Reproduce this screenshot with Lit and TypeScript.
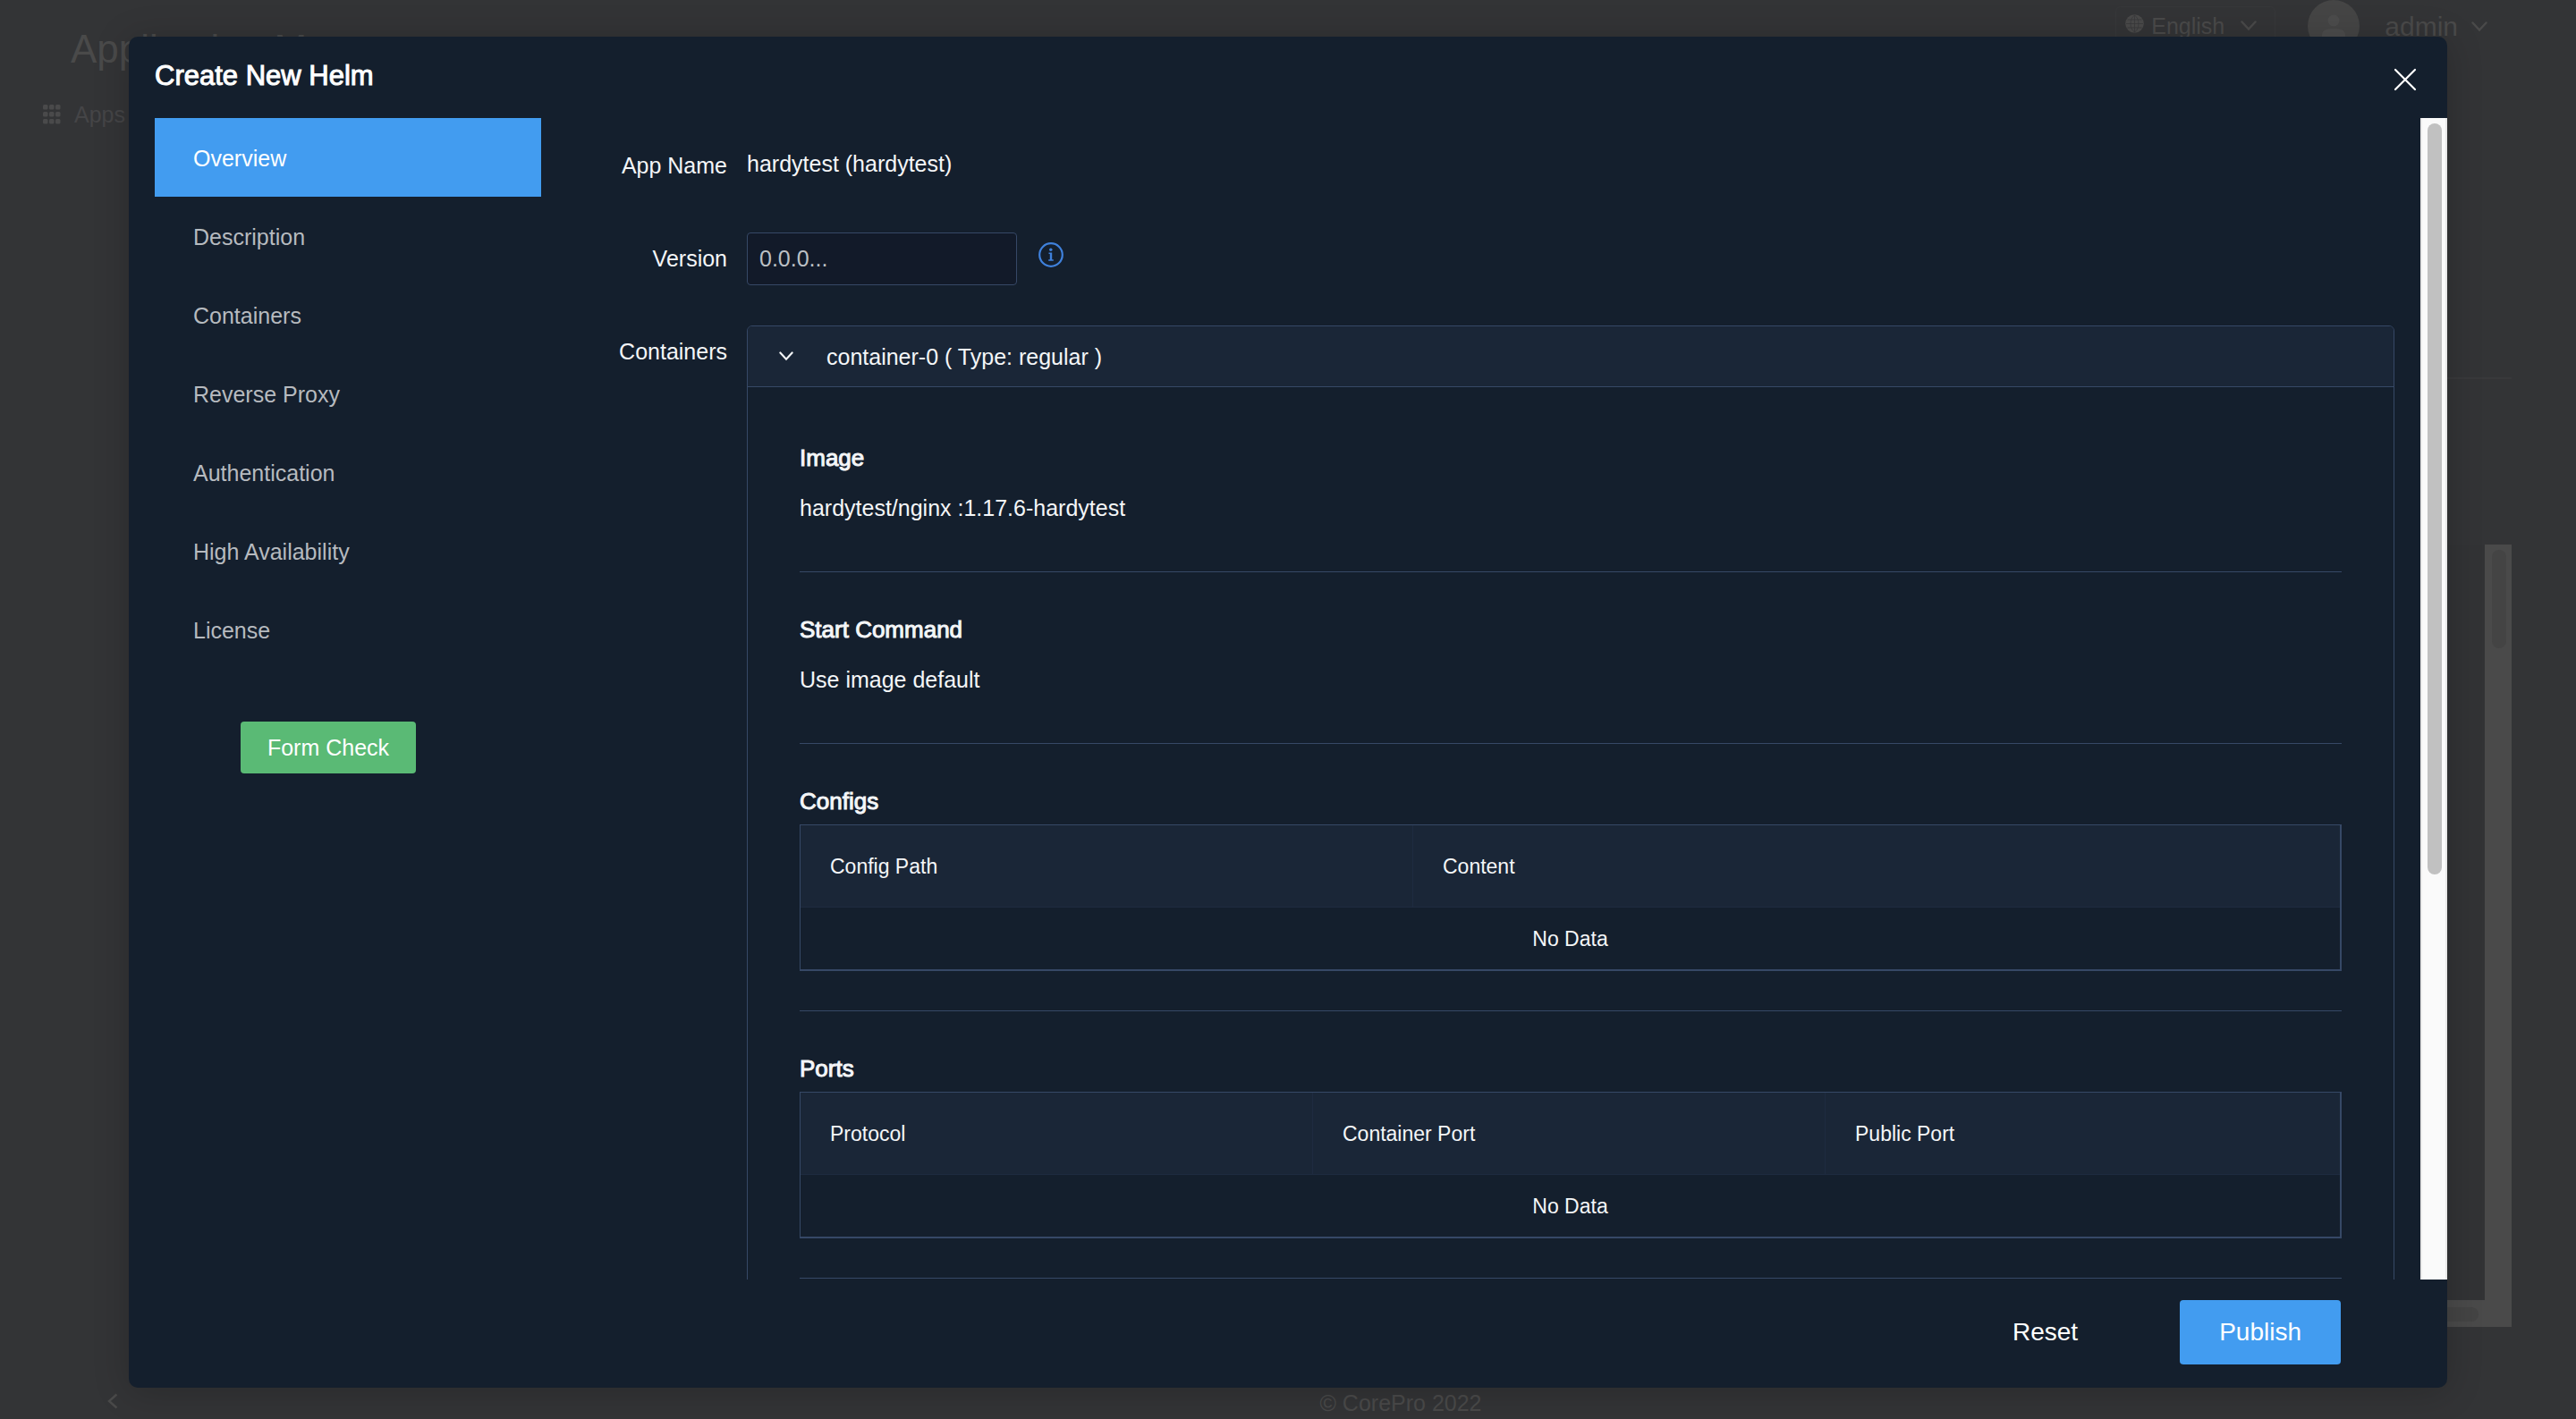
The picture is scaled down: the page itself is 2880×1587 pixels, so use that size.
import { LitElement, html, svg, css } from "lit";
import { customElement, property, state } from "lit/decorators.js";
import { classMap } from "lit/directives/class-map.js";

const chevronDown = (cls: string) => html`
  <svg class=${cls} viewBox="0 0 18 12" aria-hidden="true">
    <path d="M1.5 1.5 L9 9.5 L16.5 1.5" fill="none" stroke="currentColor" stroke-width="2.4" stroke-linecap="round" />
  </svg>
`;

/** Table with a header row and an empty-state row. */
@customElement("empty-table")
export class EmptyTable extends LitElement {
  @property({ attribute: false }) columns: { label: string; width?: number }[] = [];
  @property() caption = "";

  static styles = css`
    :host {
      display: block;
    }
    .table {
      width: 100%;
      table-layout: fixed;
      border-collapse: separate;
      border-spacing: 0;
      border: 1px solid #364866;
      border-right-width: 2px;
      border-bottom-width: 2px;
      font-size: 23px;
      line-height: 36px;
      color: #f4f6f8;
    }
    .head {
      box-sizing: border-box;
      height: 92px;
      padding: 0 33px;
      background: #1a2637;
      border-bottom: 1px solid #1e2b40;
      border-right: 1px solid #1e2b40;
      text-align: left;
      font-weight: 400;
    }
    .head:last-child {
      border-right: none;
    }
    .empty {
      height: 69px;
      padding: 0;
      text-align: center;
    }
  `;

  render() {
    return html`
      <table class="table" aria-label=${this.caption}>
        <colgroup>
          ${this.columns.map((c) => html`<col width=${c.width ?? "auto"} />`)}
        </colgroup>
        <thead>
          <tr>
            ${this.columns.map((c) => html`<th class="head" scope="col">${c.label}</th>`)}
          </tr>
        </thead>
        <tbody>
          <tr>
            <td class="empty" colspan=${this.columns.length}>No Data</td>
          </tr>
        </tbody>
      </table>
    `;
  }
}

/** Dimmed application page that lies behind the dialog. */
@customElement("backdrop-page")
export class BackdropPage extends LitElement {
  static styles = css`
    :host {
      display: grid;
      grid-template-columns: 252px 1fr;
      grid-template-rows: 92px 1fr 38px;
      height: 100%;
      overflow: hidden;
      background: #333436;
      color: #4a4a4a;
      font-size: 25px;
      line-height: 36px;
    }
    .topbar {
      grid-column: 1 / -1;
      display: flex;
      align-items: flex-start;
      padding: 0 99px 0 79px;
    }
    .title {
      flex: 1;
      margin: 0;
      padding-top: 30px;
      font-size: 44px;
      line-height: 50px;
      font-weight: 400;
      color: #4a4a4a;
    }
    .lang {
      display: flex;
      align-items: center;
      gap: 8px;
      box-sizing: border-box;
      width: 179px;
      height: 44px;
      margin-top: 7px;
      padding: 0 20px 0 10px;
      border: 1px solid #37383a;
      border-radius: 6px;
    }
    .globe {
      width: 21px;
      height: 21px;
      flex: none;
      margin-bottom: 6px;
    }
    .select {
      flex: 1;
      min-width: 0;
      appearance: none;
      border: 0;
      padding: 0;
      background: none;
      color: inherit;
      font: inherit;
      height: 36px;
    }
    .chev {
      width: 18px;
      height: 12px;
      flex: none;
    }
    .avatar {
      width: 58px;
      height: 58px;
      margin: 0 28px 0 36px;
    }
    .user {
      display: flex;
      align-items: center;
      gap: 15px;
      border: 0;
      padding: 12px 0 0;
      background: none;
      color: inherit;
      font: inherit;
      font-size: 30px;
    }
    .side {
      padding: 18px 0 0 48px;
    }
    .link {
      display: flex;
      align-items: center;
      gap: 14px;
      color: #454547;
      text-decoration: none;
    }
    .dots {
      width: 21px;
      height: 22px;
    }
    .content {
      display: flex;
      flex-direction: column;
      padding: 330px 72px 65px 0;
    }
    .rule {
      border-top: 2px solid #39393b;
    }
    .pane {
      flex: 1;
      display: grid;
      grid-template-columns: 1fr 30px;
      grid-template-rows: 1fr 30px;
      margin-top: 185px;
      background: #323335;
    }
    .vbar {
      grid-row: 1 / 3;
      grid-column: 2;
      padding: 6px 6px 0 8px;
      background: #4a4a4a;
    }
    .vthumb {
      height: 110px;
      border-radius: 8px;
      background: #444;
    }
    .hbar {
      display: flex;
      justify-content: flex-end;
      align-items: center;
      padding: 2px 7px 0 0;
      background: #4a4a4a;
    }
    .hthumb {
      width: 50%;
      height: 16px;
      border-radius: 8px;
      background: #444;
    }
    .fold {
      border: 0;
      padding: 0;
      background: none;
      color: #4a4a4a;
    }
    .fold-icon {
      width: 12px;
      height: 18px;
    }
    .foot {
      text-align: center;
      line-height: 40px;
    }
  `;

  render() {
    return html`
      <header class="topbar">
        <h1 class="title">Application Management</h1>
        <label class="lang">
          <svg class="globe" viewBox="0 0 21 21" aria-hidden="true">
            <circle cx="10.5" cy="10.5" r="10.3" fill="currentColor" />
            <path
              d="M1 10.500H20M10.500 1V20M2.500 6H18.500M2.500 15H18.500M10.500 1C4.500 5 4.500 16 10.500 20M10.500 1C16.500 5 16.500 16 10.500 20"
              fill="none"
              stroke="#38393b"
              stroke-width="0.8"
            />
          </svg>
          <select class="select" aria-label="Language">
            <option>English</option>
          </select>
          ${chevronDown("chev")}
        </label>
        <svg class="avatar" viewBox="0 0 58 58" aria-hidden="true">
          <circle cx="29" cy="29" r="29" fill="#454545" />
          <circle cx="29" cy="23" r="6.500" fill="#4c4c4c" />
          <path d="M16 44v-5q0-7 13-7t13 7v5z" fill="#4c4c4c" />
        </svg>
        <button class="user">admin ${chevronDown("chev")}</button>
      </header>
      <nav class="side">
        <a class="link" href="#apps">
          <svg class="dots" viewBox="0 0 21 22" aria-hidden="true">
            ${[0, 8, 16].map((y) =>
              [0, 7, 14].map((x) => svg`<rect x=${x} y=${y} width="5.500" height="5.500" rx="1.500" fill="#4a4a4b" />`),
            )}
          </svg>
          Apps
        </a>
      </nav>
      <main class="content">
        <div class="rule"></div>
        <div class="pane">
          <div></div>
          <div class="vbar"><div class="vthumb"></div></div>
          <div class="hbar"><div class="hthumb"></div></div>
        </div>
      </main>
      <button class="fold" aria-label="Collapse menu">
        <svg class="fold-icon" viewBox="0 0 12 18">
          <path d="M10.500 1.500 L2 9 L10.500 16.500" fill="none" stroke="currentColor" stroke-width="2.4" />
        </svg>
      </button>
      <footer class="foot">© CorePro 2022</footer>
    `;
  }
}

@customElement("app-root")
export class AppRoot extends LitElement {
  @state() private active = "Overview";

  private readonly steps = [
    "Overview",
    "Description",
    "Containers",
    "Reverse Proxy",
    "Authentication",
    "High Availability",
    "License",
  ];

  static styles = css`
    :host {
      display: block;
      position: relative;
      height: 100vh;
      font-family: "Liberation Sans", Arial, sans-serif;
      font-size: 25px;
      line-height: 36px;
      color: #f4f6f8;
    }
    .overlay {
      position: absolute;
      inset: 0;
      display: flex;
      padding: 41px 5% 35px;
    }
    .dialog {
      flex: 1;
      min-width: 0;
      display: grid;
      grid-template-rows: 91px minmax(0, 1fr) 121px;
      border-radius: 10px;
      background: #141f2d;
      box-shadow: 0 4px 40px rgba(0, 0, 0, 0.2);
    }
    .header {
      display: flex;
      align-items: flex-start;
      justify-content: space-between;
      padding: 26px 32px 0 29px;
    }
    .heading {
      margin: 0;
      font-size: 31px;
      line-height: 36px;
      font-weight: 400;
      color: #fff;
      -webkit-text-stroke: 1px #fff;
    }
    .close {
      display: flex;
      border: 0;
      padding: 7px 0 0;
      background: none;
      color: #fff;
    }
    .close-icon {
      width: 30px;
      height: 30px;
    }
    .body {
      display: grid;
      grid-template-columns: 461px minmax(0, 1fr) 30px;
      min-height: 0;
    }
    .nav {
      padding-left: 29px;
    }
    .steps {
      margin: 0;
      padding: 0;
      list-style: none;
    }
    .step {
      display: block;
      height: 88px;
      padding-left: 43px;
      line-height: 90px;
      color: #b6babf;
      text-decoration: none;
    }
    .step.active {
      background: #429cf0;
      color: #fff;
    }
    .check {
      height: 58px;
      width: 196px;
      margin: 59px 0 0 96px;
      border: 0;
      padding: 0;
      border-radius: 4px;
      background: #5aba75;
      color: #fff;
      font: inherit;
    }
    .form {
      overflow: hidden;
      padding: 24px 29px 0 0;
      display: grid;
      grid-template-columns: 208px minmax(0, 1fr);
      column-gap: 22px;
      row-gap: 46px;
      align-items: start;
      align-content: start;
    }
    .label {
      text-align: right;
      line-height: 58px;
    }
    .value {
      line-height: 54px;
    }
    .version {
      display: flex;
      gap: 24px;
    }
    .input {
      box-sizing: border-box;
      width: 302px;
      height: 59px;
      padding: 0 13px;
      border: 1px solid #364866;
      border-radius: 4px;
      background: #121a29;
      color: #f4f6f8;
      font: inherit;
      margin-bottom: -1px;
    }
    .input::placeholder {
      color: #bcc0c5;
      opacity: 1;
    }
    .info {
      width: 28px;
      height: 50px;
      color: #3f81dc;
    }
    .panel {
      border: 1px solid #364866;
      border-radius: 6px;
    }
    .panel-head {
      display: flex;
      align-items: center;
      gap: 37px;
      width: 100%;
      height: 68px;
      border: 0;
      border-bottom: 1px solid #364866;
      border-radius: 5px 5px 0 0;
      padding: 0 35px;
      background: #1a2637;
      color: inherit;
      font: inherit;
    }
    .panel-chev {
      width: 16px;
      height: 11px;
    }
    .panel-body {
      padding: 15px 58px 58px;
    }
    .section {
      padding: 46px 0 53px;
      border-bottom: 1px solid #364866;
    }
    .section.tabular {
      padding-bottom: 44px;
    }
    .section-title {
      margin: 0;
      font-size: 26px;
      font-weight: 400;
      -webkit-text-stroke: 1px #f4f6f8;
    }
    .section-text {
      margin: 20px 0 0;
    }
    .section-table {
      margin-top: 8px;
    }
    .track {
      box-sizing: border-box;
      border: solid #e9e9e9;
      border-width: 0 2px;
      padding: 6px 4px 0 6px;
      background: #fafafa;
    }
    .thumb {
      height: 65%;
      border-radius: 8px;
      background: #c1c1c1;
    }
    .actions {
      display: flex;
      justify-content: flex-end;
      align-items: flex-start;
      gap: 40px;
      padding: 23px 119px 0 0;
    }
    .button {
      height: 72px;
      border: 0;
      padding: 0 44px;
      border-radius: 4px;
      background: none;
      color: #fff;
      font: inherit;
      font-size: 28px;
    }
    .button.ghost {
      padding: 0 74px;
    }
    .button.primary {
      background: #429cf0;
    }
  `;

  private pick(e: Event, step: string) {
    e.preventDefault();
    this.active = step;
  }

  render() {
    return html`
      <backdrop-page></backdrop-page>
      <div class="overlay">
        <section class="dialog" role="dialog" aria-labelledby="dialog-title">
          <header class="header">
            <h2 class="heading" id="dialog-title">Create New Helm</h2>
            <button class="close" aria-label="Close">
              <svg class="close-icon" viewBox="0 0 30 30">
                <path d="M4 4 L26 26 M26 4 L4 26" stroke="currentColor" stroke-width="2.2" stroke-linecap="round" />
              </svg>
            </button>
          </header>

          <div class="body">
            <nav class="nav">
              <ul class="steps">
                ${this.steps.map(
                  (s) => html`
                    <li>
                      <a
                        class=${classMap({ step: true, active: s === this.active })}
                        href="#"
                        @click=${(e: Event) => this.pick(e, s)}
                        >${s}</a
                      >
                    </li>
                  `,
                )}
              </ul>
              <button class="check">Form Check</button>
            </nav>

            <div class="form">
              <span class="label">App Name</span>
              <span class="value">hardytest (hardytest)</span>

              <label class="label" for="version">Version</label>
              <div class="version">
                <input class="input" id="version" type="text" placeholder="0.0.0..." />
                <svg class="info" viewBox="0 0 28 28" role="img" aria-label="Version format">
                  <circle cx="14" cy="14" r="12.800" fill="none" stroke="currentColor" stroke-width="2.200" />
                  <circle cx="13.800" cy="8.300" r="1.700" fill="currentColor" />
                  <path d="M11.500 11.500H15.200V19.300H16.800V20.800H11.200V19.300H12.800V13H11.500Z" fill="currentColor" />
                </svg>
              </div>

              <span class="label">Containers</span>
              <div class="panel">
                <button class="panel-head" aria-expanded="true">
                  ${chevronDown("panel-chev")}
                  <span>container-0 ( Type: regular )</span>
                </button>
                <div class="panel-body">
                  <div class="section">
                    <h3 class="section-title">Image</h3>
                    <p class="section-text">hardytest/nginx :1.17.6-hardytest</p>
                  </div>
                  <div class="section">
                    <h3 class="section-title">Start Command</h3>
                    <p class="section-text">Use image default</p>
                  </div>
                  <div class="section tabular">
                    <h3 class="section-title">Configs</h3>
                    <empty-table
                      class="section-table"
                      caption="Configs"
                      .columns=${[{ label: "Config Path", width: 685 }, { label: "Content" }]}
                    ></empty-table>
                  </div>
                  <div class="section tabular">
                    <h3 class="section-title">Ports</h3>
                    <empty-table
                      class="section-table"
                      caption="Ports"
                      .columns=${[
                        { label: "Protocol", width: 573 },
                        { label: "Container Port", width: 573 },
                        { label: "Public Port" },
                      ]}
                    ></empty-table>
                  </div>
                </div>
              </div>
            </div>

            <div class="track"><div class="thumb"></div></div>
          </div>

          <footer class="actions">
            <button class="button ghost">Reset</button>
            <button class="button primary">Publish</button>
          </footer>
        </section>
      </div>
    `;
  }
}
